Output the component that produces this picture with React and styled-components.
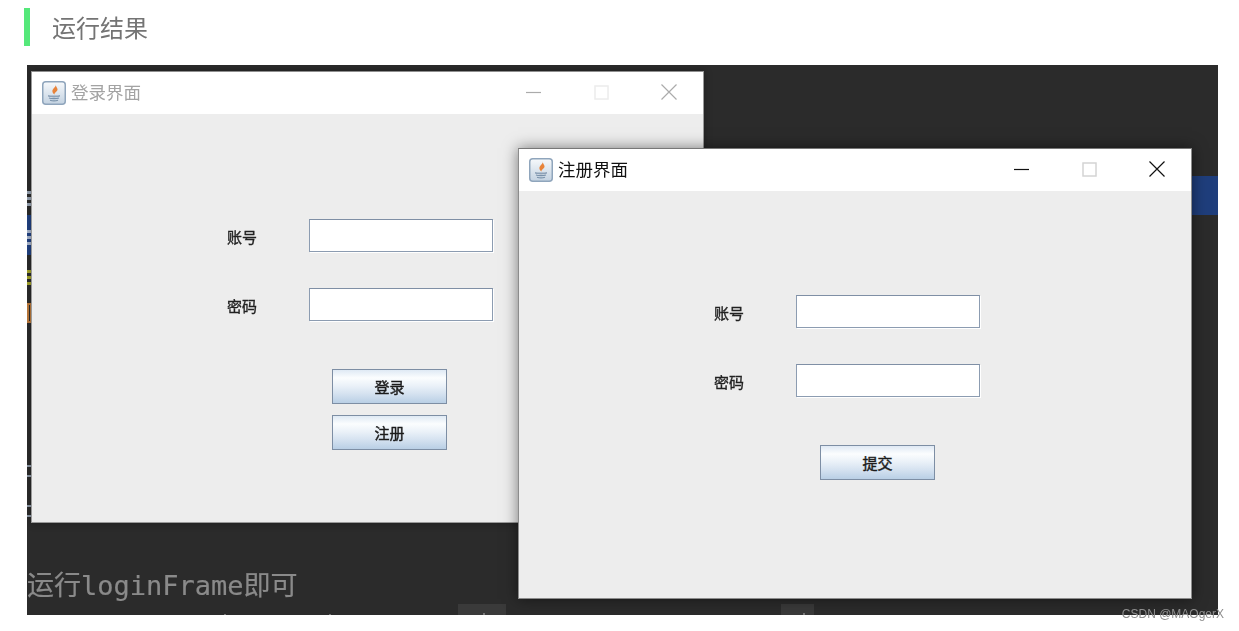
import React from "react";
import styled, { createGlobalStyle } from "styled-components";

const GlobalStyle = createGlobalStyle`
  html, body {
    margin: 0;
    padding: 0;
    background: #fff;
    overflow: hidden;
  }
  * {
    box-sizing: border-box;
  }
`;

const cjk = `"Noto Sans CJK SC", "Noto Sans", sans-serif`;

const Page = styled.div`
  position: relative;
  width: 1239px;
  height: 631px;
  padding-top: 8px;
  font-family: ${cjk};
  filter: blur(0.4px);
  overflow: hidden;
`;

const Heading = styled.h2`
  display: flex;
  align-items: center;
  height: 38px;
  margin: 0 0 19px 24px;
  padding-left: 22px;
  border-left: 6px solid #55e87a;
  font-size: 24px;
  font-weight: 400;
  line-height: 38px;
  color: #747474;
`;

const Backdrop = styled.div`
  position: relative;
  display: flex;
  flex-direction: column;
  justify-content: flex-end;
  width: 1191px;
  height: 550px;
  margin-left: 27px;
  padding-bottom: 11px;
  background: #2b2b2b;
  overflow: hidden;
`;

/* bits of the code editor that peek out behind the windows */
const Mark = styled.span`
  position: absolute;
  left: ${(p) => p.$x}px;
  top: ${(p) => p.$y}px;
  width: ${(p) => p.$w}px;
  height: ${(p) => p.$h}px;
  background: ${(p) => p.$c};
`;

const OutlineMark = styled(Mark)`
  background: transparent;
  border: 2px solid ${(p) => p.$c};
  border-right-width: 1px;
`;

const Note = styled.div`
  font-family: "DejaVu Sans Mono", "Noto Sans CJK SC", monospace;
  font-size: 27px;
  line-height: 28px;
  color: #8a8a8a;
  white-space: nowrap;
  margin-bottom: 4px;
  -webkit-text-stroke: 0.2px #8a8a8a;
`;

const Window = styled.section`
  position: absolute;
  left: ${(p) => p.$x}px;
  top: ${(p) => p.$y}px;
  display: flex;
  flex-direction: column;
  width: ${(p) => p.$w}px;
  height: ${(p) => p.$h}px;
  background: #ededed;
  border: 1px solid ${(p) => (p.$active ? "#8c8c8c" : "#9a9a9a")};
  border-top-color: ${(p) => (p.$active ? "#777" : "#8f8f8f")};
  box-shadow: 0 0 ${(p) => (p.$active ? "14px" : "8px")} rgba(0, 0, 0, ${(p) => (p.$active ? 0.5 : 0.3)});
`;

const TitleBar = styled.header`
  display: flex;
  align-items: center;
  flex: none;
  height: 42px;
  padding-left: 10px;
  background: #fff;
`;

const TitleText = styled.span`
  margin: 0 0 2px 5px;
  font-size: 17.5px;
  line-height: 24px;
  color: ${(p) => (p.$active ? "#111" : "#a3a3a3")};
`;

const Controls = styled.div`
  display: flex;
  margin: 0 0.5px 2px auto;
`;

const Control = styled.span`
  display: flex;
  align-items: center;
  justify-content: center;
  width: 67.5px;
  height: 40px;
`;

const Form = styled.form`
  display: flex;
  flex-direction: column;
  padding: ${(p) => p.$top}px 0 0 195px;
`;

const Fields = styled.div`
  display: grid;
  grid-template-columns: 82px 184px;
  grid-auto-rows: 33px;
  row-gap: 36px;
  align-items: center;
`;

const Label = styled.label`
  font-size: 15px;
  line-height: 20px;
  color: #222;
  padding-top: 3px;
  -webkit-text-stroke: 0.35px #222;
`;

const Input = styled.input`
  display: block;
  width: 184px;
  height: 33px;
  padding: 0;
  background: #fff;
  border: 1px solid #8c9cb1;
  border-top-color: #7f8fa5;
  border-radius: 0;
  box-shadow: 1px 1px 0 #fff;
  outline: none;
`;

const Buttons = styled.div`
  display: flex;
  flex-direction: column;
  gap: 11px;
  margin: 48px 0 0 ${(p) => p.$left}px;
`;

const Button = styled.button`
  width: 115px;
  height: 35px;
  padding: 0;
  font-family: ${cjk};
  font-size: 15px;
  font-weight: 400;
  line-height: 33px;
  color: #1c1c1c;
  -webkit-text-stroke: 0.45px #1c1c1c;
  background: linear-gradient(#dfe9f4 0%, #fbfdfe 24%, #eaf1f8 48%, #d5e2f0 72%, #b9cfe5 100%);
  border: 1px solid #7d8ea4;
  border-radius: 0;
`;

const Watermark = styled.div`
  position: absolute;
  right: 15px;
  top: 606px;
  font-family: "Liberation Sans", Arial, sans-serif;
  font-size: 12px;
  line-height: 16px;
  color: #8f8f8f;
  white-space: nowrap;
`;

function JavaIcon() {
  return (
    <svg width="24" height="24" viewBox="0 0 24 24" aria-hidden="true">
      <defs>
        <linearGradient id="javaBg" x1="0" y1="0" x2="0" y2="1">
          <stop offset="0" stopColor="#f7f9fb" />
          <stop offset="1" stopColor="#c3d2e1" />
        </linearGradient>
      </defs>
      <rect x="0.75" y="0.75" width="22.5" height="22.5" rx="3" fill="url(#javaBg)" stroke="#8fa5bc" strokeWidth="1.5" />
      <path d="M13.500 3c1.500 3-4 4.500-3 8 .3 1.200 1.200 2 2 2.500-.5-2 3.500-3 3-5.500-.3-1.600-2-2.500-2-5z" fill="#e8833a" />
      <path d="M6 14c2 .8 10 .8 12 0v1.500c-2 1.200-10 1.200-12 0z" fill="#8ea2b8" />
      <path d="M7 17c2 .8 8 .8 10 0M8 19.300c2 .6 6 .6 8 0" fill="none" stroke="#7a92ab" strokeWidth="1.200" />
    </svg>
  );
}

function WindowControls({ active }) {
  const main = active ? "#111" : "#ababab";
  const box = active ? "#d4d4d4" : "#ececec";
  return (
    <Controls>
      <Control>
        <svg width="15" height="15" viewBox="0 0 15 15" aria-hidden="true">
          <path d="M0 7.500h15" stroke={main} strokeWidth="1.200" />
        </svg>
      </Control>
      <Control>
        <svg width="15" height="15" viewBox="0 0 15 15" aria-hidden="true">
          <rect x="1" y="1" width="13" height="13" fill="none" stroke={box} strokeWidth="1.500" />
        </svg>
      </Control>
      <Control>
        <svg width="16" height="16" viewBox="0 0 16 16" aria-hidden="true">
          <path d="M.5.500l15 15M15.500.500l-15 15" stroke={main} strokeWidth="1.200" />
        </svg>
      </Control>
    </Controls>
  );
}

function AppWindow({ x, y, width, height, title, active, formTop, buttonsLeft, actions }) {
  return (
    <Window $x={x} $y={y} $w={width} $h={height} $active={active}>
      <TitleBar>
        <JavaIcon />
        <TitleText $active={active}>{title}</TitleText>
        <WindowControls active={active} />
      </TitleBar>
      <Form $top={formTop}>
        <Fields>
          <Label>账号</Label>
          <Input />
          <Label>密码</Label>
          <Input />
        </Fields>
        <Buttons $left={buttonsLeft}>
          {actions.map((a) => (
            <Button type="button" key={a}>
              {a}
            </Button>
          ))}
        </Buttons>
      </Form>
    </Window>
  );
}

const marks = [
  [0, 126, 4, 3, "#98a4b3"],
  [0, 132, 4, 3, "#98a4b3"],
  [0, 138, 4, 3, "#98a4b3"],
  [0, 150, 4, 40, "#214283"],
  [0, 165, 4, 3, "#a9b7cf"],
  [0, 171, 4, 3, "#a9b7cf"],
  [0, 177, 4, 3, "#a9b7cf"],
  [0, 205, 4, 3, "#a6a62a"],
  [0, 211, 4, 3, "#a6a62a"],
  [0, 217, 4, 3, "#a6a62a"],
  [0, 400, 4, 2, "#8f9aa8"],
  [0, 410, 4, 2, "#8f9aa8"],
  [0, 440, 4, 2, "#8f9aa8"],
  [0, 450, 4, 2, "#8f9aa8"],
  [1165, 111, 26, 39, "#1f3e7c"],
  [431, 539, 48, 11, "#3a3a3a"],
  [754, 539, 33, 11, "#3a3a3a"],
  [456, 548, 2, 2, "#777"],
  [776, 548, 2, 2, "#777"],
  [197, 549, 2, 1, "#777"],
  [302, 549, 2, 1, "#777"],
];

export default function App() {
  return (
    <>
      <GlobalStyle />
      <Page>
        <Heading>运行结果</Heading>
        <Backdrop>
          {marks.map(([x, y, w, h, c]) => (
            <Mark key={`${x}-${y}`} $x={x} $y={y} $w={w} $h={h} $c={c} />
          ))}
          <OutlineMark $x={0} $y={238} $w={4} $h={20} $c="#c07c3c" />
          <Note>运行loginFrame即可</Note>
          <AppWindow
            x={4}
            y={6}
            width={673}
            height={452}
            title="登录界面"
            formTop={105}
            buttonsLeft={105}
            actions={["登录", "注册"]}
          />
          <AppWindow
            x={491}
            y={83}
            width={674}
            height={451}
            active
            title="注册界面"
            formTop={104}
            buttonsLeft={106}
            actions={["提交"]}
          />
        </Backdrop>
        <Watermark>CSDN @MAOgerX</Watermark>
      </Page>
    </>
  );
}
